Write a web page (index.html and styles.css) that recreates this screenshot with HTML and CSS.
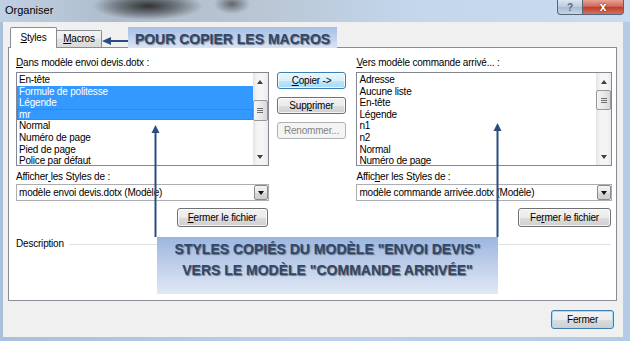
FILE: index.html
```html
<!DOCTYPE html>
<html lang="fr">
<head>
    <meta charset="UTF-8">
    <title>Organiser</title>
    <link rel="stylesheet" href="styles.css">
</head>
<body>
<div class="window">
    <div class="titlebar">
        <span class="title">Organiser</span>
        <div class="caption">
            <span class="cap-btn help">?</span>
            <span class="cap-btn close">x</span>
        </div>
    </div>

    <div class="client">
        <div class="tabs">
            <div class="tab tab-styles active"><u>S</u>tyles</div>
            <div class="tab tab-macros"><u>M</u>acros</div>
        </div>

        <div class="panel">
            <div class="columns">
                <!-- modele source -->
                <div class="col">
                    <div class="label"><u>D</u>ans modèle envoi devis.dotx :</div>
                    <div class="listbox">
                        <ul class="items">
                            <li>En-tête</li>
                            <li class="sel">Formule de politesse</li>
                            <li class="sel">Légende</li>
                            <li class="sel focus">mr</li>
                            <li>Normal</li>
                            <li>Numéro de page</li>
                            <li>Pied de page</li>
                            <li>Police par défaut</li>
                        </ul>
                        <div class="scrollbar">
                            <div class="sb-arrow sb-up"></div>
                            <div class="sb-track"><div class="thumb thumb-low"></div></div>
                            <div class="sb-arrow sb-down"></div>
                        </div>
                    </div>
                    <div class="label label-show">Afficher<u> </u>les Styles de :</div>
                    <div class="combo">
                        <span class="combo-text">modèle envoi devis.dotx (Modèle)</span>
                        <span class="combo-btn"></span>
                    </div>
                    <div class="col-foot">
                        <button class="btn btn-close-file"><u>F</u>ermer le fichier</button>
                    </div>
                </div>

                <!-- boutons -->
                <div class="actions">
                    <button class="btn hot"><u>C</u>opier -&gt;</button>
                    <button class="btn">Sup<u>p</u>rimer</button>
                    <button class="btn" disabled>Renommer...</button>
                </div>

                <!-- modele destination -->
                <div class="col col-right">
                    <div class="label"><u>V</u>ers modèle commande arrivé... :</div>
                    <div class="listbox">
                        <ul class="items">
                            <li>Adresse</li>
                            <li>Aucune liste</li>
                            <li>En-tête</li>
                            <li>Légende</li>
                            <li>n1</li>
                            <li>n2</li>
                            <li>Normal</li>
                            <li>Numéro de page</li>
                        </ul>
                        <div class="scrollbar">
                            <div class="sb-arrow sb-up"></div>
                            <div class="sb-track"><div class="thumb"></div></div>
                            <div class="sb-arrow sb-down"></div>
                        </div>
                    </div>
                    <div class="label label-show">Affic<u>h</u>er les Styles de :</div>
                    <div class="combo">
                        <span class="combo-text">modèle commande arrivée.dotx (Modèle)</span>
                        <span class="combo-btn"></span>
                    </div>
                    <div class="col-foot">
                        <button class="btn btn-close-file wide">Fe<u>r</u>mer le fichier</button>
                    </div>
                </div>
            </div>

            <div class="description">
                <span>Description</span>
                <span class="rule"></span>
            </div>
        </div>

        <div class="footer">
            <button class="btn default">Fermer</button>
        </div>
    </div>

    <!-- annotations -->
    <div class="note note-macros">POUR COPIER LES MACROS</div>
    <div class="note note-styles">STYLES COPIÉS DU MODÈLE "ENVOI DEVIS"<br>VERS LE MODÈLE "COMMANDE ARRIVÉE"</div>
    <svg class="arrows" width="630" height="341" viewBox="0 0 630 341">
        <line x1="109" y1="41" x2="128" y2="41" stroke="#2b4c7e" stroke-width="2"/>
        <polygon points="102,41 111,37 111,45" fill="#2b4c7e"/>
        <line x1="155.5" y1="131" x2="155.5" y2="237" stroke="#2b4c7e" stroke-width="2"/>
        <polygon points="155.5,125 151.5,133 159.5,133" fill="#2b4c7e"/>
        <line x1="497.5" y1="129" x2="497.5" y2="237" stroke="#2b4c7e" stroke-width="2"/>
        <polygon points="497.5,123 493.5,131 501.5,131" fill="#2b4c7e"/>
    </svg>
</div>
</body>
</html>
```

FILE: styles.css
```css
* {
    box-sizing: border-box;
}

body {
    margin: 0;
    font-family: "Liberation Sans", Arial, sans-serif;
    font-size: 10px;
    letter-spacing: -0.2px;
    color: #000;
}

u {
    text-decoration: underline;
}

.window {
    position: relative;
    width: 630px;
    height: 341px;
    overflow: hidden;
    display: flex;
    flex-direction: column;
    background: linear-gradient(to right, #a9c0db, #bcd1e8 50%, #b4cbe5);
}

/* barre de titre */
.titlebar {
    height: 22px;
    flex: none;
    display: flex;
    align-items: flex-start;
    padding-left: 5px;
    background:
        radial-gradient(55px 14px at 148px 6px, rgba(35, 35, 35, .9), rgba(35, 35, 35, .45) 55%, rgba(35, 35, 35, 0)),
        radial-gradient(18px 10px at 232px 4px, rgba(40, 40, 40, .6), rgba(40, 40, 40, 0)),
        linear-gradient(to right, #c0d1e4, #aebccb 18%, #b8c5d2 40%, #c3d6ec 65%, #c8dbef);
}

.title {
    font-size: 11px;
    line-height: 20px;
    letter-spacing: 0;
}

.caption {
    margin-left: auto;
    margin-right: 6px;
    display: flex;
}

.cap-btn {
    height: 15px;
    display: flex;
    align-items: center;
    justify-content: center;
    font-weight: bold;
    border: 1px solid #56657a;
    border-top: none;
}

.help {
    width: 25px;
    border-right: none;
    border-radius: 0 0 0 4px;
    background: linear-gradient(#dce5ef, #bccadb 50%, #a9bbd0 51%, #c7d6e6);
    color: #667;
    font-size: 10px;
}

.close {
    width: 42px;
    border-radius: 0 0 4px 0;
    background: linear-gradient(#e6a496, #d16b5c 45%, #c23c2c 52%, #d2735c);
    color: #fff;
    font-size: 12px;
    text-shadow: 0 0 2px #5a1a10;
}

/* zone cliente */
.client {
    flex: 1;
    margin: 0 7px 4px 3px;
    background: #f0f0f0;
    padding: 5px 6px 0 5px;
    display: flex;
    flex-direction: column;
}

.tabs {
    display: flex;
    align-items: flex-end;
    height: 20px;
    padding-left: 2px;
    position: relative;
    z-index: 1;
}

.tab {
    height: 17px;
    line-height: 15px;
    text-align: center;
    border: 1px solid #898c95;
    border-bottom: none;
    background: linear-gradient(#f3f3f3, #ebebeb 50%, #e2e2e2 51%, #dadada);
}

.tab-styles {
    width: 47px;
    border-radius: 2px 2px 0 0;
}

.tab-macros {
    width: 46px;
    margin-left: -1px;
    border-radius: 0 2px 0 0;
}

.tab.active {
    height: 21px;
    margin-bottom: -1px;
    line-height: 20px;
    background: #fff;
    position: relative;
    z-index: 2;
}

.panel {
    height: 254px;
    flex: none;
    border: 1px solid #898c95;
    background: #fff;
    padding: 8px 4px 0 7px;
}

.columns {
    display: flex;
}

.col {
    width: 253px;
    display: flex;
    flex-direction: column;
}

.col-right {
    width: 256px;
}

.label {
    height: 14px;
    line-height: 14px;
    white-space: nowrap;
}

.label-show {
    margin-top: 4px;
}

.listbox {
    margin-top: 2px;
    height: 94px;
    border: 1px solid #828790;
    display: flex;
    background: #fff;
}

.items {
    flex: 1;
    list-style: none;
    margin: 0;
    padding: 1px 0 0;
}

.items li {
    height: 11.6px;
    line-height: 11.6px;
    padding-left: 2px;
    white-space: nowrap;
}

.items li.sel {
    background: #3399ff;
    color: #fff;
}

.items li.focus {
    outline: 1px dotted #8a6a3a;
    outline-offset: -1px;
}

.scrollbar {
    width: 15px;
    display: flex;
    flex-direction: column;
    background: linear-gradient(to right, #e4e4e4, #f5f5f5 30%, #f5f5f5 70%, #ebebeb);
}

.sb-arrow {
    height: 17px;
    display: flex;
    align-items: center;
    justify-content: center;
}

.sb-arrow::before {
    content: "";
    border-left: 3.5px solid transparent;
    border-right: 3.5px solid transparent;
}

.sb-up::before {
    border-bottom: 4px solid #404040;
}

.sb-down::before {
    border-top: 4px solid #404040;
}

.sb-track {
    flex: 1;
}

.thumb {
    height: 20px;
    border: 1px solid #979797;
    border-radius: 2px;
    background: linear-gradient(to right, #f4f4f4, #e9e9e9 50%, #d8d8d8);
    display: flex;
    align-items: center;
    justify-content: center;
}

.thumb::before {
    content: "";
    width: 6px;
    height: 5px;
    background: repeating-linear-gradient(#6f6f6f 0 1px, transparent 1px 2px);
}

.thumb-low {
    margin-top: 10px;
    height: 21px;
}

.combo {
    height: 17px;
    border: 1px solid #abadb3;
    display: flex;
    background: #fff;
}

.combo-text {
    flex: 1;
    padding-left: 2px;
    line-height: 15px;
    white-space: nowrap;
}

.combo-btn {
    width: 14px;
    border: 1px solid #8a8a8a;
    border-radius: 2px;
    background: linear-gradient(#f4f4f4, #e6e6e6 50%, #d8d8d8 51%, #cdcdcd);
    display: flex;
    align-items: center;
    justify-content: center;
}

.combo-btn::before {
    content: "";
    border-left: 3.5px solid transparent;
    border-right: 3.5px solid transparent;
    border-top: 4px solid #111;
}

.col-foot {
    display: flex;
    justify-content: flex-end;
    margin-top: 7px;
}

/* boutons */
.btn {
    font: inherit;
    letter-spacing: inherit;
    height: 17px;
    padding: 0;
    color: #000;
    border: 1px solid #707070;
    border-radius: 3px;
    background: linear-gradient(#f2f2f2, #ebebeb 50%, #dddddd 51%, #cfcfcf);
    box-shadow: inset 0 0 0 1px rgba(255, 255, 255, .75);
}

.btn.hot {
    border-color: #3c7fb1;
    background: linear-gradient(#eaf6fd, #d9f0fc 50%, #bee6fd 51%, #a7d9f5);
}

.btn:disabled {
    border-color: #adb2b5;
    background: #f4f4f4;
    color: #838383;
    box-shadow: none;
}

.btn.default {
    border-color: #3c7fb1;
    box-shadow: inset 0 0 0 1px #a3dcf9;
    width: 63px;
    height: 19px;
}

.btn-close-file {
    width: 91px;
    height: 19px;
    margin-right: 1px;
}

.btn-close-file.wide {
    width: 93px;
}

.actions {
    width: 70px;
    margin: 0 10px 0 8px;
    padding-top: 16px;
    display: flex;
    flex-direction: column;
    gap: 8px;
}

.description {
    margin-top: 10px;
    height: 14px;
    line-height: 14px;
    display: flex;
    align-items: center;
    padding-right: 1px;
}

.description .rule {
    flex: 1;
    height: 1px;
    margin-left: 5px;
    background: #dfe3e8;
}

.footer {
    display: flex;
    justify-content: flex-end;
    padding: 9px 3px 0 0;
}

/* annotations */
.note {
    position: absolute;
    text-align: center;
    font-weight: bold;
    font-size: 14px;
    letter-spacing: 0;
    color: #30476b;
    text-shadow: 1px 1px 1px rgba(0, 0, 0, .45);
    white-space: nowrap;
}

.note-macros {
    left: 128px;
    top: 27px;
    width: 209px;
    height: 21px;
    line-height: 21px;
    padding-top: 2px;
    background: linear-gradient(#a6bfe5, #c4d4ee 60%, #dbe4f3);
}

.note-styles {
    left: 157px;
    top: 237px;
    width: 341px;
    height: 57px;
    line-height: 21px;
    padding-top: 2px;
    background: linear-gradient(#9cb6e0, #bccde9 45%, #e0e8f5);
}

.arrows {
    position: absolute;
    left: 0;
    top: 0;
    pointer-events: none;
}
```
